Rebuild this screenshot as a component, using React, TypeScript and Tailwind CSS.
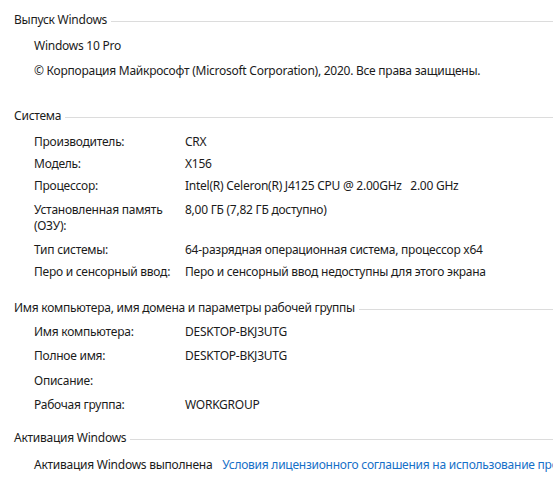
type Row = { label: string; value?: string; gap: string };

const system: Row[] = [
  { label: "Производитель:", value: "CRX", gap: "mt-[10px]" },
  { label: "Модель:", value: "X156", gap: "mt-[6px]" },
  { label: "Процессор:", value: "Intel(R) Celeron(R) J4125 CPU @ 2.00GHz   2.00 GHz", gap: "mt-[6px]" },
  { label: "Установленная память (ОЗУ):", value: "8,00 ГБ (7,82 ГБ доступно)", gap: "mt-[8px]" },
  { label: "Тип системы:", value: "64-разрядная операционная система, процессор x64", gap: "mt-[8px]" },
  { label: "Перо и сенсорный ввод:", value: "Перо и сенсорный ввод недоступны для этого экрана", gap: "mt-[6px]" },
];

const computer: Row[] = [
  { label: "Имя компьютера:", value: "DESKTOP-BKJ3UTG", gap: "mt-[8px]" },
  { label: "Полное имя:", value: "DESKTOP-BKJ3UTG", gap: "mt-[8px]" },
  { label: "Описание:", gap: "mt-[9px]" },
  { label: "Рабочая группа:", value: "WORKGROUP", gap: "mt-[8px]" },
];

function Heading({ title, gap }: { title: string; gap: string }) {
  return (
    <div className={`${gap} flex h-4 items-center gap-1 pl-[14px]`}>
      <span className="whitespace-nowrap">{title}</span>
      <div className="mt-[3px] h-px flex-1 bg-[#dcdcdc]" />
    </div>
  );
}

function InfoRow({ row }: { row: Row }) {
  return (
    <div className={`${row.gap} flex pl-[34px]`}>
      <div className="w-[151px] shrink-0 pr-1">{row.label}</div>
      <div className="whitespace-pre">{row.value}</div>
    </div>
  );
}

export default function App() {
  return (
    <div
      className="h-[485px] w-[553px] overflow-hidden bg-white pt-3 text-[12px] leading-4 tracking-[-0.25px] text-[#1b1b1b]"
      style={{ fontFamily: '"Segoe UI", "Noto Sans", "Open Sans", sans-serif' }}
    >
      <Heading title="Выпуск Windows" gap="" />
      <div className="mt-[10px] pl-[34px]">Windows 10 Pro</div>
      <div className="mt-[9px] whitespace-nowrap pl-[34px]">
        © Корпорация Майкрософт (Microsoft Corporation), 2020. Все права защищены.
      </div>

      <Heading title="Система" gap="mt-[29px]" />
      {system.map((r) => (
        <InfoRow key={r.label} row={r} />
      ))}

      <Heading title="Имя компьютера, имя домена и параметры рабочей группы" gap="mt-[20px]" />
      {computer.map((r) => (
        <InfoRow key={r.label} row={r} />
      ))}

      <Heading title="Активация Windows" gap="mt-[17px]" />
      <div className="mt-[11px] flex overflow-hidden whitespace-nowrap pl-[34px]">
        <span className="shrink-0">Активация Windows выполнена</span>
        <span className="ml-[10px] text-[#1670c8]">
          Условия лицензионного соглашения на использование программного обеспечения корпорации Майкрософт
        </span>
      </div>
    </div>
  );
}
